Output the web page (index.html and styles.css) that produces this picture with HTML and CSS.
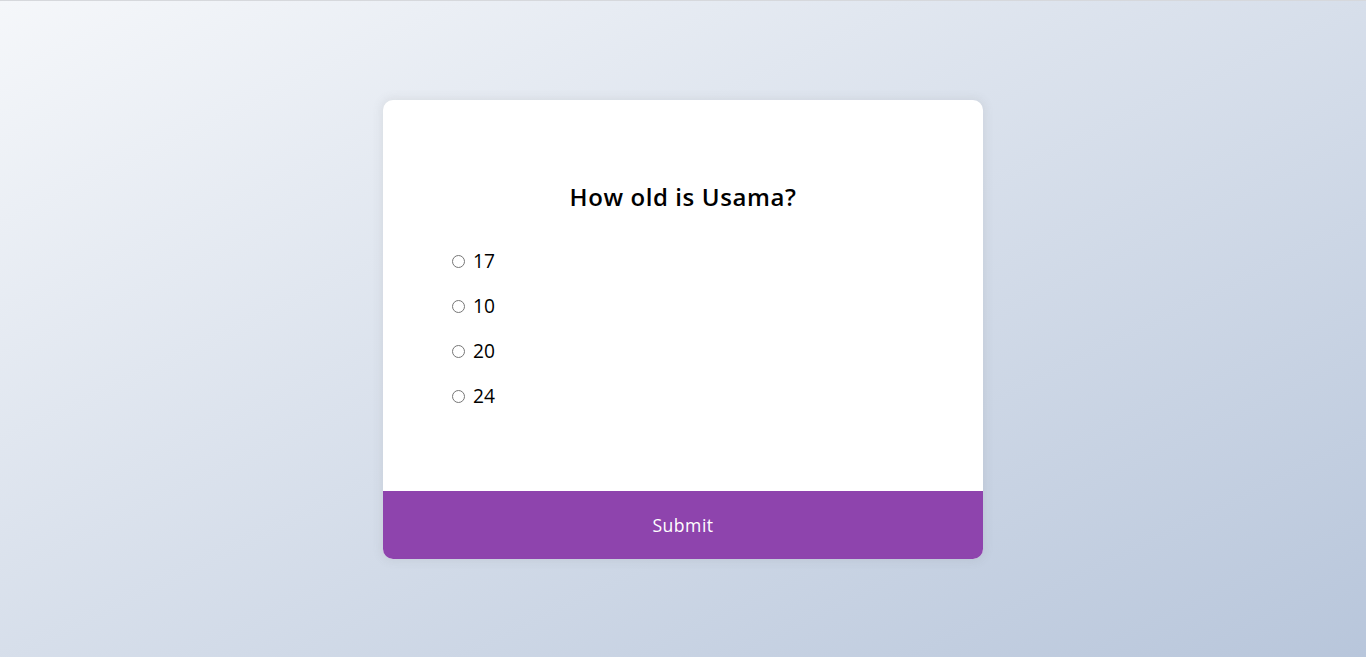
FILE: index.html
```html
<!DOCTYPE html>
<html lang="en">
<head>
<meta charset="UTF-8">
<title>Quiz</title>
<link rel="stylesheet" href="styles.css">
</head>
<body>
<div class="quiz-container">
  <div class="quiz-header">
    <h2 class="question">How old is Usama?</h2>
    <ul class="answers">
      <li><input type="radio" name="answer" id="a" class="answer"> <label for="a">17</label></li>
      <li><input type="radio" name="answer" id="b" class="answer"> <label for="b">10</label></li>
      <li><input type="radio" name="answer" id="c" class="answer"> <label for="c">20</label></li>
      <li><input type="radio" name="answer" id="d" class="answer"> <label for="d">24</label></li>
    </ul>
  </div>
  <button class="submit">Submit</button>
</div>
</body>
</html>
```
FILE: styles.css
```css
* { box-sizing: border-box; }
html {
  border-top: 1px solid #d6d8dc;
  overflow: hidden;
}
body {
  margin: 0;
  height: 100vh;
  background: linear-gradient(to bottom right, #f5f7fa, #b8c6db);
  font-family: "Open Sans", "Liberation Sans", sans-serif;
  display: flex;
  align-items: flex-start;
  justify-content: center;
  padding-top: 99px;
}
.quiz-container {
  background: #fff;
  border-radius: 10px;
  box-shadow: 0 0 10px 2px rgba(100, 100, 100, 0.1);
  width: 600px;
  overflow: hidden;
}
.quiz-header {
  padding: 64px 64px 65px;
}
.question {
  margin: 0;
  padding: 15px 16px;
  text-align: center;
  font-size: 24px;
  line-height: 36px;
  font-weight: 600;
  letter-spacing: 0.6px;
  color: #000;
}
.answers {
  list-style: none;
  padding: 0;
  margin: 16px 0;
}
.answers li {
  font-size: 19.2px;
  line-height: 29px;
  margin: 16px 0;
  color: #000;
}
.answers li input {
  margin: 3px 3px 0 5px;
}
.submit {
  background: #8e44ad;
  color: #fff;
  border: none;
  display: block;
  width: 100%;
  font-family: inherit;
  font-size: 17.6px;
  line-height: 26.4px;
  letter-spacing: 0.5px;
  padding: 20.8px;
  cursor: pointer;
}
```
